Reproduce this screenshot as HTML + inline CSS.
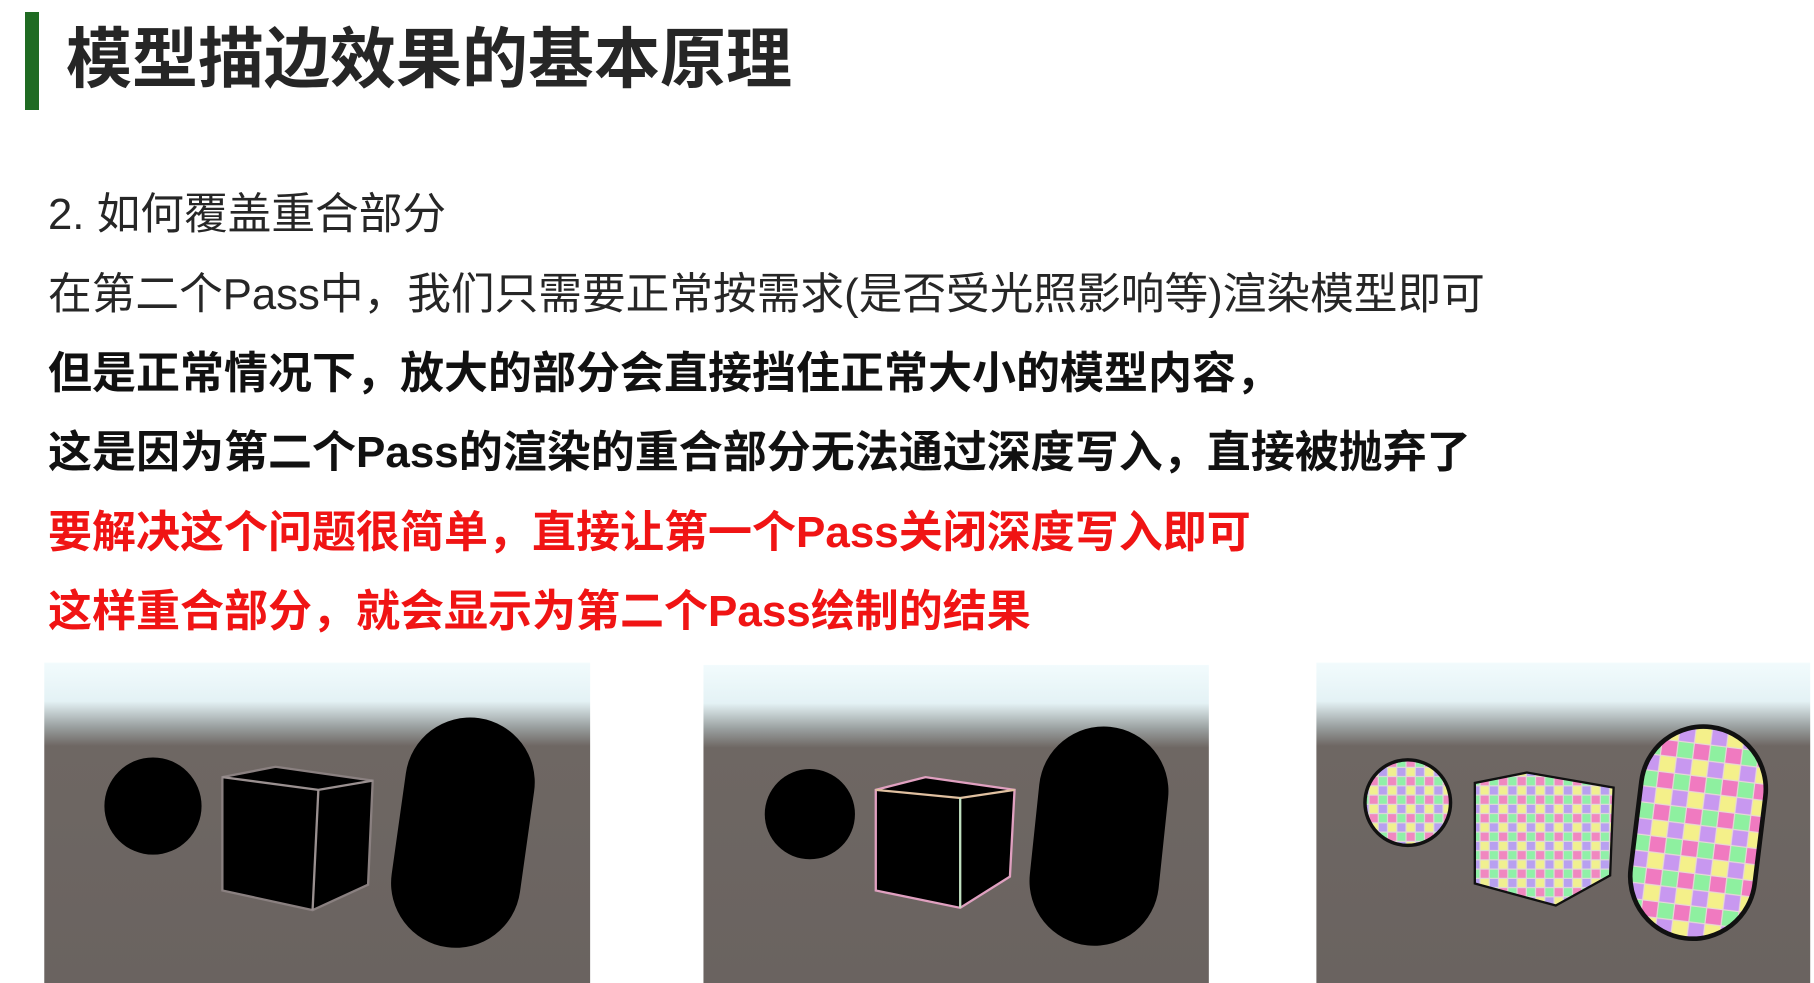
<!DOCTYPE html>
<html><head><meta charset="utf-8"><style>
html,body{margin:0;padding:0;background:#fff;width:1814px;height:983px;overflow:hidden;position:relative}
.t{position:absolute;left:48px;font-family:"Liberation Sans","Noto Sans CJK SC",sans-serif;font-size:43.7px;color:#262626;white-space:nowrap;line-height:1}
.b{font-weight:bold;color:#111;font-size:44px}
.r{font-weight:bold;color:#f01414;font-size:44px}
</style></head><body>
<div style="position:absolute;left:25px;top:12px;width:14px;height:98px;background:#1f6b22"></div>
<div style="position:absolute;left:66px;top:26px;font-family:'Liberation Sans','Noto Sans CJK SC',sans-serif;font-size:66px;font-weight:bold;color:#262626;line-height:1;white-space:nowrap">模型描边效果的基本原理</div>
<div class="t" style="top:193px">2. 如何覆盖重合部分</div>
<div class="t" style="top:273px">在第二个Pass中，我们只需要正常按需求(是否受光照影响等)渲染模型即可</div>
<div class="t b" style="top:352px">但是正常情况下，放大的部分会直接挡住正常大小的模型内容，</div>
<div class="t b" style="top:431px">这是因为第二个Pass的渲染的重合部分无法通过深度写入，直接被抛弃了</div>
<div class="t r" style="top:511px">要解决这个问题很简单，直接让第一个Pass关闭深度写入即可</div>
<div class="t r" style="top:590px">这样重合部分，就会显示为第二个Pass绘制的结果</div>
<svg style="position:absolute;left:0;top:0" width="1814" height="983" viewBox="0 0 1568 850">
<defs>
<linearGradient id="sky" x1="0" y1="0" x2="0" y2="1">
<stop offset="0" stop-color="#f2fbfd"/><stop offset="0.12" stop-color="#e4f2f5"/><stop offset="0.2" stop-color="#9aa0a0"/><stop offset="0.26" stop-color="#6e6763"/><stop offset="1" stop-color="#6a6360"/>
</linearGradient>
<pattern id="chk" width="28" height="28" patternUnits="userSpaceOnUse">
<rect width="28" height="28" fill="#e8d8d8"/>
<rect x="0" y="0" width="13" height="13" fill="#f07ac0"/>
<rect x="14" y="0" width="13" height="13" fill="#8ef0a0"/>
<rect x="0" y="14" width="13" height="13" fill="#f4f08a"/>
<rect x="14" y="14" width="13" height="13" fill="#c898f0"/>
</pattern>
<pattern id="chk2" width="16" height="16" patternUnits="userSpaceOnUse">
<rect width="16" height="16" fill="#e0dada"/>
<rect x="0" y="0" width="7" height="7" fill="#f088c0"/>
<rect x="8" y="0" width="7" height="7" fill="#90f0a8"/>
<rect x="0" y="8" width="7" height="7" fill="#f0f090"/>
<rect x="8" y="8" width="7" height="7" fill="#b8a0f0"/>
</pattern>
</defs>
<rect x="38" y="573" width="472" height="277" fill="url(#sky)"/>
<circle cx="132" cy="697" r="42" fill="#000"/>
<polygon points="192,672 238,663 322,675 318,765 270,787 192,770" fill="#000" stroke="#8a8080" stroke-width="2"/>
<polyline points="192,672 275,683 322,675" fill="none" stroke="#9a9090" stroke-width="2"/>
<line x1="275" y1="683" x2="270" y2="787" stroke="#9a9090" stroke-width="2"/>
<rect x="344" y="620" width="112" height="200" rx="56" fill="#000" transform="rotate(8 400 720)"/>
<rect x="608" y="575" width="437" height="275" fill="url(#sky)"/>
<circle cx="700" cy="704" r="39" fill="#000"/>
<polygon points="757,683 800,672 877,683 873,758 830,785 757,770" fill="#000" stroke="#e0a0c0" stroke-width="2"/>
<polyline points="757,683 830,690 877,683" fill="none" stroke="#e0c0a0" stroke-width="2"/>
<line x1="830" y1="690" x2="830" y2="785" stroke="#c0e0c0" stroke-width="2"/>
<rect x="894" y="628" width="112" height="190" rx="56" fill="#000" transform="rotate(6 950 723)"/>
<rect x="1138" y="573" width="427" height="277" fill="url(#sky)"/>
<circle cx="1217" cy="694" r="37" fill="url(#chk2)" stroke="#111" stroke-width="3"/>
<polygon points="1275,677 1320,668 1395,681 1392,757 1345,783 1275,764" fill="url(#chk2)" stroke="#111" stroke-width="2"/>
<rect x="1414" y="628" width="108" height="184" rx="54" fill="url(#chk)" stroke="#111" stroke-width="4" transform="rotate(7 1468 720)"/>
</svg>
</body></html>
